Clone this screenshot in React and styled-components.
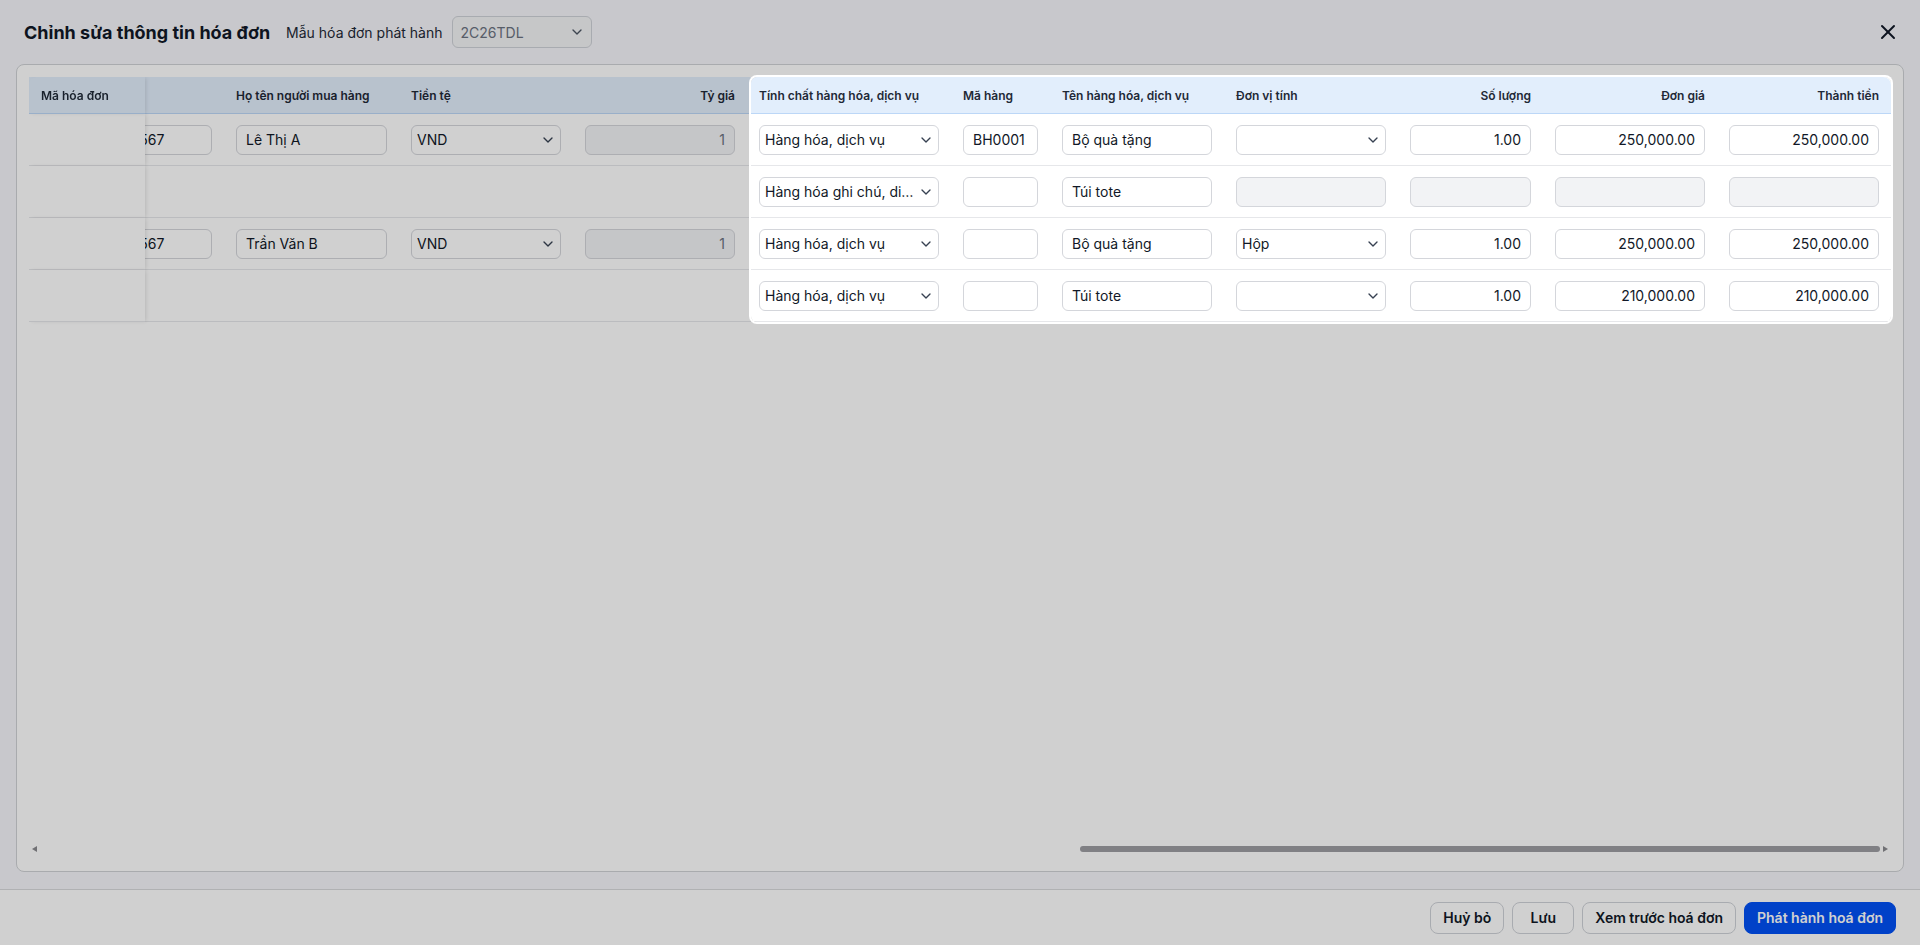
import React, { useLayoutEffect, useRef, useState } from 'react'
import styled, { createGlobalStyle } from 'styled-components'
import { ChevronDown, X } from 'lucide-react'

const GlobalStyle = createGlobalStyle`
  * { box-sizing: border-box; }
  html, body { margin: 0; padding: 0; height: 100%; overflow: hidden; }
  body {
    font-family: Inter, "Noto Sans", sans-serif;
    color: #111827;
    background: #f5f6fa;
  }
`

// hidden invoice columns sit to the left, the table is scrolled to its right end
const columns = [
  { key: 'code', label: 'Mã hóa đơn', width: 116, sticky: true, group: 'none' },
  { key: 'symbol', label: 'Ký hiệu', width: 174, group: 'invoice' },
  { key: 'number', label: 'Số hóa đơn', width: 174, group: 'invoice' },
  { key: 'date', label: 'Ngày hóa đơn', width: 174, group: 'invoice' },
  { key: 'payment', label: 'Hình thức thanh toán', width: 204, group: 'invoice', type: 'select' },
  { key: 'customer', label: 'Mã khách hàng', width: 174, group: 'invoice' },
  { key: 'company', label: 'Tên đơn vị mua hàng', width: 300, group: 'invoice' },
  { key: 'tax', label: 'Mã số thuế', width: 174, group: 'invoice' },
  { key: 'address', label: 'Địa chỉ', width: 360, group: 'invoice' },
  { key: 'email', label: 'Email', width: 240, group: 'invoice' },
  { key: 'idcard', label: 'Căn cước công dân', width: 174, group: 'invoice' },
  { key: 'passport', label: 'Số hộ chiếu', width: 185, group: 'invoice' },
  { key: 'phone', label: 'Điện thoại', width: 165, group: 'invoice' },
  { key: 'buyer', label: 'Họ tên người mua hàng', width: 175, group: 'invoice' },
  { key: 'currency', label: 'Tiền tệ', width: 174, group: 'invoice', type: 'select' },
  { key: 'rate', label: 'Tỷ giá', width: 174, group: 'invoice', type: 'locked', align: 'right' },
  { key: 'kind', label: 'Tính chất hàng hóa, dịch vụ', width: 204, group: 'item', type: 'select', spot: 'start' },
  { key: 'sku', label: 'Mã hàng', width: 99, group: 'item' },
  { key: 'name', label: 'Tên hàng hóa, dịch vụ', width: 174, group: 'item' },
  { key: 'unit', label: 'Đơn vị tính', width: 174, group: 'item', type: 'select', lockOnNote: true },
  { key: 'qty', label: 'Số lượng', width: 145, group: 'item', align: 'right', lockOnNote: true },
  { key: 'price', label: 'Đơn giá', width: 174, group: 'item', align: 'right', lockOnNote: true },
  { key: 'total', label: 'Thành tiền', width: 174, group: 'item', align: 'right', lockOnNote: true, spot: 'end' },
]

const rows = [
  {
    id: 1,
    invoice: { symbol: '2C26TDL', date: '15/01/2026', payment: 'TM/CK', phone: '0901234567', buyer: 'Lê Thị A', currency: 'VND', rate: '1' },
    item: { kind: 'Hàng hóa, dịch vụ', sku: 'BH0001', name: 'Bộ quà tặng', unit: '', qty: '1.00', price: '250,000.00', total: '250,000.00' },
  },
  {
    id: 2,
    item: { kind: 'Hàng hóa ghi chú, diễn giải', sku: '', name: 'Túi tote', note: true },
  },
  {
    id: 3,
    invoice: { symbol: '2C26TDL', date: '15/01/2026', payment: 'TM/CK', phone: '0901234567', buyer: 'Trần Văn B', currency: 'VND', rate: '1' },
    item: { kind: 'Hàng hóa, dịch vụ', sku: '', name: 'Bộ quà tặng', unit: 'Hộp', qty: '1.00', price: '250,000.00', total: '250,000.00' },
  },
  {
    id: 4,
    item: { kind: 'Hàng hóa, dịch vụ', sku: '', name: 'Túi tote', unit: '', qty: '1.00', price: '210,000.00', total: '210,000.00' },
  },
]

const tableWidth = columns.reduce((sum, c) => sum + c.width, 0)

const App = () => {
  const scrollerRef = useRef(null)
  const startRef = useRef(null)
  const endRef = useRef(null)
  const bodyRef = useRef(null)
  const [spot, setSpot] = useState(null)
  const [thumb, setThumb] = useState({ left: 0, width: 100 })

  useLayoutEffect(() => {
    const scroller = scrollerRef.current
    scroller.scrollLeft = scroller.scrollWidth
    const { scrollLeft, scrollWidth, clientWidth } = scroller
    setThumb({ left: (scrollLeft / scrollWidth) * 100, width: (clientWidth / scrollWidth) * 100 })

    const a = startRef.current.getBoundingClientRect()
    const b = endRef.current.getBoundingClientRect()
    const c = bodyRef.current.getBoundingClientRect()
    setSpot({ left: a.left + 4, top: a.top, width: b.right - a.left - 4, height: c.bottom - a.top })
  }, [])

  const refFor = (col) => (col.spot === 'start' ? startRef : col.spot === 'end' ? endRef : undefined)

  return (
    <Modal>
      <GlobalStyle />
      <Header>
        <Title>Chỉnh sửa thông tin hóa đơn</Title>
        <TemplateLabel>Mẫu hóa đơn phát hành</TemplateLabel>
        <TemplateSelect>
          <span>2C26TDL</span>
          <ChevronDown size={16} strokeWidth={2} color="#4b5563" />
        </TemplateSelect>
        <CloseButton aria-label="Đóng">
          <X size={24} strokeWidth={2} />
        </CloseButton>
      </Header>

      <Body>
        <Panel>
          <Scroller ref={scrollerRef}>
            <Table style={{ width: tableWidth }}>
              <colgroup>
                {columns.map((col) => (
                  <col key={col.key} style={{ width: col.width }} />
                ))}
              </colgroup>
              <thead>
                <tr>
                  {columns.map((col) => (
                    <Th key={col.key} ref={refFor(col)} $sticky={col.sticky} $align={col.align}>
                      {col.label}
                    </Th>
                  ))}
                </tr>
              </thead>
              <tbody ref={bodyRef}>
                {rows.map((row) => (
                  <tr key={row.id}>
                    {columns.map((col) => (
                      <Td key={col.key} $sticky={col.sticky}>
                        {renderField(col, row)}
                      </Td>
                    ))}
                  </tr>
                ))}
              </tbody>
            </Table>
          </Scroller>
          <ScrollBar>
            <ScrollArrow $dir="left" />
            <Track>
              <Thumb style={{ left: `${thumb.left}%`, width: `${thumb.width}%` }} />
            </Track>
            <ScrollArrow $dir="right" />
          </ScrollBar>
        </Panel>
      </Body>

      <Footer>
        <Button>Huỷ bỏ</Button>
        <Button>Lưu</Button>
        <Button>Xem trước hoá đơn</Button>
        <Button $primary>Phát hành hoá đơn</Button>
      </Footer>

      {spot && <Spotlight style={spot} />}
    </Modal>
  )
}

const renderField = (col, row) => {
  if (col.group === 'none') return null
  if (col.group === 'invoice' && !row.invoice) return null
  const source = col.group === 'invoice' ? row.invoice : row.item
  const value = source[col.key] ?? ''
  const locked = col.type === 'locked' || (col.lockOnNote && row.item.note)

  if (locked) return <Field readOnly value={value} $align={col.align} $locked />
  if (col.type === 'select') {
    return (
      <SelectBox>
        <SelectText>{value}</SelectText>
        <ChevronDown size={16} strokeWidth={2} color="#374151" />
      </SelectBox>
    )
  }
  return <Field readOnly value={value} $align={col.align} />
}

const Modal = styled.div`
  width: 100vw;
  height: 100vh;
  display: flex;
  flex-direction: column;
  background: #f5f6fa;
`
const Header = styled.header`
  flex: none;
  height: 64px;
  display: flex;
  align-items: center;
  padding: 0 20px 0 24px;
`
const Title = styled.h2`
  margin: 0;
  font-size: 18px;
  font-weight: 700;
  color: #111827;
`
const TemplateLabel = styled.span`
  margin-left: 16px;
  font-size: 14px;
  color: #1f2937;
`
const TemplateSelect = styled.div`
  margin-left: 9px;
  width: 140px;
  height: 32px;
  display: flex;
  align-items: center;
  justify-content: space-between;
  padding: 0 6px 0 8px;
  border: 1px solid #cfd2d8;
  border-radius: 6px;
  background: #f3f4f6;
  font-size: 14px;
  color: #6b7280;
`
const CloseButton = styled.button`
  margin-left: auto;
  display: flex;
  padding: 0;
  border: none;
  background: transparent;
  color: #111827;
  cursor: pointer;
`
const Body = styled.div`
  flex: 1;
  min-height: 0;
  display: flex;
  padding: 0 16px 17px;
`
const Panel = styled.div`
  flex: 1;
  min-width: 0;
  display: flex;
  flex-direction: column;
  padding: 12px 12px 16px;
  border: 1px solid #d0d2d6;
  border-radius: 8px;
  background: #fff;
`
const Scroller = styled.div`
  flex: 1;
  min-height: 0;
  overflow: hidden;
`
const ScrollBar = styled.div`
  flex: none;
  height: 12px;
  display: flex;
  align-items: center;
`
const ScrollArrow = styled.span`
  flex: none;
  width: 0;
  height: 0;
  margin: 0 3px;
  border-top: 3px solid transparent;
  border-bottom: 3px solid transparent;
  ${(p) => (p.$dir === 'left' ? 'border-right: 5px solid #8a8a8f;' : 'border-left: 5px solid #8a8a8f;')}
`
const Track = styled.div`
  flex: 1;
  height: 6px;
  position: relative;
`
const Thumb = styled.div`
  position: absolute;
  top: 0;
  bottom: 0;
  border-radius: 3px;
  background: #9d9da2;
`
const Table = styled.table`
  table-layout: fixed;
  border-collapse: separate;
  border-spacing: 0;
`
const Th = styled.th`
  height: 37px;
  padding: 0 12px;
  background: #e2eefc;
  border-bottom: 1px solid #bcd7f7;
  font-size: 12px;
  font-weight: 600;
  color: #1f2937;
  text-align: ${(p) => p.$align || 'left'};
  white-space: nowrap;
  overflow: hidden;

  &:first-child {
    border-top-left-radius: 8px;
  }
  &:last-child {
    border-top-right-radius: 8px;
  }
  ${(p) =>
    p.$sticky &&
    `
    position: sticky;
    left: 0;
    z-index: 2;
    box-shadow: 2px 0 4px -1px rgba(0, 0, 0, 0.12);
  `}
`
const Td = styled.td`
  height: 52px;
  padding: 0 12px;
  border-bottom: 1px solid #e6e7ea;
  background: #fff;
  ${(p) =>
    p.$sticky &&
    `
    position: sticky;
    left: 0;
    z-index: 1;
    box-shadow: 2px 0 4px -1px rgba(0, 0, 0, 0.12);
  `}
`
const Field = styled.input`
  display: block;
  width: 100%;
  height: 30px;
  padding: 0 9px;
  border: 1px solid #d4d6db;
  border-radius: 6px;
  outline: none;
  background: ${(p) => (p.$locked ? '#f2f3f5' : '#fff')};
  font-family: Inter, "Noto Sans", sans-serif;
  font-size: 14px;
  color: ${(p) => (p.$locked ? '#6b7280' : '#111827')};
  text-align: ${(p) => p.$align || 'left'};
`
const SelectBox = styled.div`
  width: 100%;
  height: 30px;
  display: flex;
  align-items: center;
  gap: 2px;
  padding: 0 4px 0 5px;
  border: 1px solid #d4d6db;
  border-radius: 6px;
  background: #fff;
  font-size: 14px;
  color: #111827;

  svg {
    flex: none;
  }
`
const SelectText = styled.span`
  flex: 1;
  min-width: 0;
  overflow: hidden;
  white-space: nowrap;
  text-overflow: ellipsis;
`
const Footer = styled.footer`
  flex: none;
  height: 56px;
  display: flex;
  align-items: center;
  justify-content: flex-end;
  gap: 8px;
  padding: 0 24px;
  border-top: 1px solid #d8d9dc;
  background: #fff;
`
const Button = styled.button`
  min-width: 62px;
  height: 32px;
  padding: 0 12px;
  border: 1px solid ${(p) => (p.$primary ? '#0050f6' : '#cfd2d8')};
  border-radius: 8px;
  background: ${(p) => (p.$primary ? '#0050f6' : '#fff')};
  color: ${(p) => (p.$primary ? '#fff' : '#111827')};
  font-family: Inter, "Noto Sans", sans-serif;
  font-size: 14px;
  font-weight: 600;
  cursor: pointer;
`
// tour highlight: dims the page around the item columns
const Spotlight = styled.div`
  position: fixed;
  z-index: 10;
  pointer-events: none;
  border-radius: 6px;
  box-shadow: 0 0 0 2px #fff, 0 0 0 4000px rgba(0, 0, 0, 0.184);
`

export default App
